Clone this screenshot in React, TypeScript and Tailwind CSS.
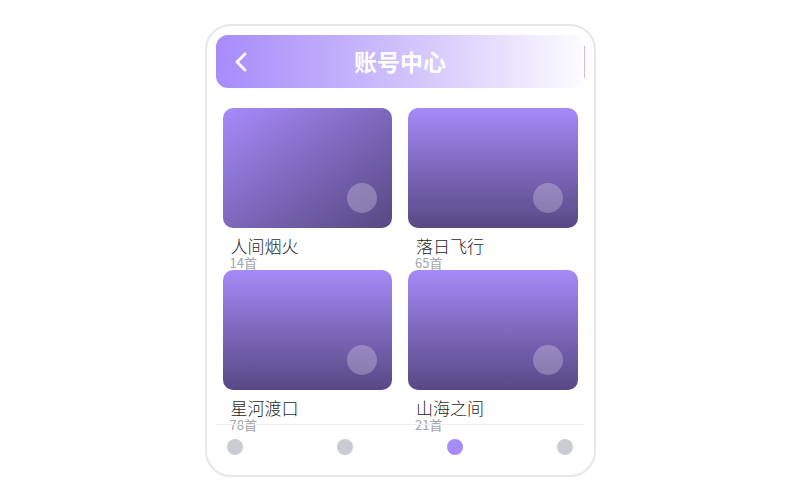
import React from "react";

const items = [
  { title: "人间烟火", count: "14首", diag: true },
  { title: "落日飞行", count: "65首", diag: false },
  { title: "星河渡口", count: "78首", diag: false },
  { title: "山海之间", count: "21首", diag: false },
];

export default function App() {
  return (
    <div
      className="w-[800px] h-[500px] bg-white overflow-hidden"
      style={{ fontFamily: '"Noto Sans CJK SC", "Noto Sans", sans-serif' }}
    >
      <div className="mx-auto mt-[24px] w-[391px] h-[453px] rounded-[26px] border-2 border-[#e6e7eb] bg-white px-[9px] pt-[9px] flex flex-col">
        <div className="h-[53px] shrink-0 rounded-[12px] bg-gradient-to-r from-[#a78bfa] via-[#cfc0fb] to-[#fdfcff] flex items-center">
          <div className="w-[48px] pl-[17px] flex items-center">
            <svg width="16" height="20" viewBox="0 0 16 20" fill="none">
              <polyline
                points="12,2 4,10 12,18"
                stroke="white"
                strokeWidth="2.8"
                strokeLinecap="round"
                strokeLinejoin="round"
              />
            </svg>
          </div>
          <div className="flex-1 text-center text-white font-bold text-[23px] leading-none">
            账号中心
          </div>
          <div className="w-[48px] flex justify-end">
            <div className="w-[1px] h-[32px] bg-[#c9bdf6]" />
          </div>
        </div>
        <div className="h-[336px] shrink-0 pt-[20px] px-[7px]">
          <div className="grid grid-cols-2 gap-x-[16px]">
            {items.map((it) => (
              <div key={it.title} className="h-[162px]">
                <div
                  className={
                    "relative h-[120px] rounded-[10px] " +
                    (it.diag
                      ? "bg-gradient-to-br from-[#a78bfa] to-[#574883]"
                      : "bg-gradient-to-b from-[#a68af8] to-[#584985]")
                  }
                >
                  <div className="absolute right-[15px] bottom-[15px] w-[30px] h-[30px] rounded-full bg-white/25" />
                </div>
                <div className="pl-[8px] mt-[8px] text-[17px] leading-[20px] font-light text-[#1f1f23]">
                  {it.title}
                </div>
                <div className="pl-[7px] text-[13px] leading-[14px] text-[#a1a5ab]">
                  {it.count}
                </div>
              </div>
            ))}
          </div>
        </div>
        <div className="h-[44px] shrink-0 border-t border-[#eceef1] flex items-center justify-between px-[11px]">
          <div className="w-[16px] h-[16px] rounded-full bg-[#c9cdd3]" />
          <div className="w-[16px] h-[16px] rounded-full bg-[#c9cdd3]" />
          <div className="w-[16px] h-[16px] rounded-full bg-[#a78bfa]" />
          <div className="w-[16px] h-[16px] rounded-full bg-[#c9cdd3]" />
        </div>
      </div>
    </div>
  );
}
